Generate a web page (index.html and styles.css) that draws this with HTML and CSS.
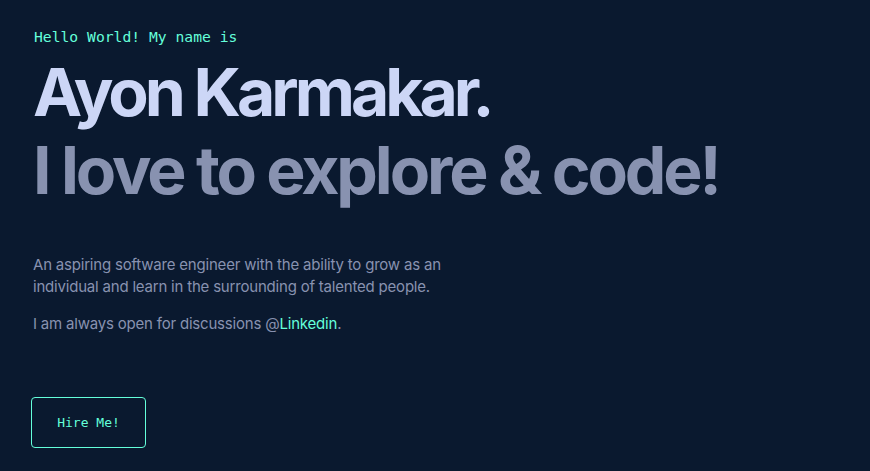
FILE: index.html
```html
<!DOCTYPE html>
<html lang="en">
<head>
<meta charset="utf-8">
<title>Ayon Karmakar</title>
<link rel="stylesheet" href="styles.css">
</head>
<body>
<section class="hero">
  <p class="greeting">Hello World! My name is</p>
  <h1 class="name">Ayon Karmakar.</h1>
  <h2 class="tagline">I love to explore &amp; code!</h2>
  <div class="about">
    <p>An aspiring software engineer with the ability to grow as an individual and learn in the surrounding of talented people.</p>
    <p>I am always open for discussions @<a href="#" class="link">Linkedin</a>.</p>
  </div>
  <a href="#" class="btn">Hire Me!</a>
</section>
</body>
</html>
```
FILE: styles.css
```css
* { box-sizing: border-box; }
html, body {
  margin: 0;
  padding: 0;
  background: #0a192f;
  height: 100%;
}
body {
  font-family: Inter, "Liberation Sans", sans-serif;
  color: #8892b0;
  overflow: hidden;
}
.hero {
  display: flex;
  flex-direction: column;
  align-items: flex-start;
  padding: 27px 0 0 33px;
}
.greeting {
  margin: 0 0 0 1px;
  font-family: "DejaVu Sans Mono", monospace;
  font-size: 14.7px;
  color: #64ffda;
  line-height: 20px;
}
.name {
  margin: 8px 0 0 0;
  font-size: 66px;
  font-weight: 700;
  color: #ccd6f6;
  line-height: 74px;
  letter-spacing: -4px;
}
.tagline {
  margin: 4px 0 0 0;
  font-size: 66px;
  font-weight: 700;
  color: #8892b0;
  line-height: 74px;
  letter-spacing: -3.1px;
}
.about {
  margin-top: 47px;
  max-width: 440px;
  font-size: 15px;
  line-height: 22px;
  letter-spacing: -0.2px;
}
.about p { margin: 0 0 15px; }
.link { color: #64ffda; text-decoration: none; }
.btn {
  margin-top: 47px;
  margin-left: -2px;
  width: 115px;
  height: 51px;
  display: flex;
  align-items: center;
  justify-content: center;
  border: 1px solid #64ffda;
  border-radius: 4px;
  color: #64ffda;
  font-family: "DejaVu Sans Mono", monospace;
  font-size: 13px;
  text-decoration: none;
}
```
